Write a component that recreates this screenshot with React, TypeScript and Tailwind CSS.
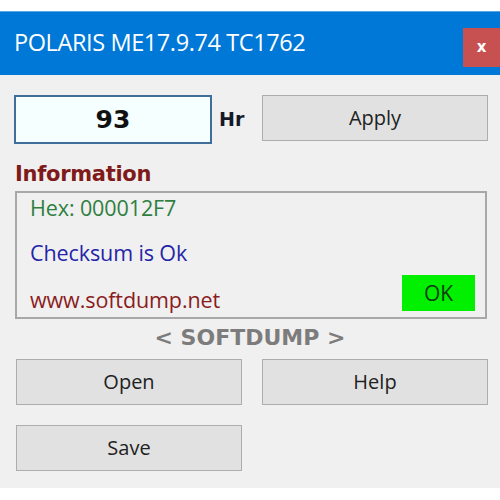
export default function App() {
    return (
        <div className="w-[500px] h-[500px] bg-white pt-[11px] overflow-hidden" style={{ fontFamily: '"Open Sans", "Noto Sans", sans-serif' }}>
            <div className="h-[64px] bg-[#0078d7] border-t border-[#5aa5e6] flex items-start">
                <span className="text-white text-[23.5px] ml-[14px] mt-[19px] leading-none tracking-[-0.4px]">POLARIS ME17.9.74 TC1762</span>
                <button className="ml-auto mt-[16px] w-[37px] h-[39px] bg-[#c75050] text-white font-bold text-[15px] leading-none flex items-center justify-center" style={{ fontFamily: '"DejaVu Sans", sans-serif' }}>x</button>
            </div>

            <div className="h-[413px] bg-[#f0f0f0] flex flex-col px-[14px]">
                <div className="flex items-center mt-[20px]">
                    <div className="w-[198px] h-[49px] border-2 border-[#3f6f98] bg-[#f6ffff] flex items-center justify-center">
                        <span className="text-[25px] font-bold text-[#111] leading-none" style={{ fontFamily: '"DejaVu Sans", sans-serif' }}>93</span>
                    </div>
                    <span className="ml-[7px] text-[19px] font-bold text-[#141a2a]" style={{ fontFamily: '"DejaVu Sans", sans-serif' }}>Hr</span>
                    <button className="ml-auto mr-[-2px] -mt-[4px] w-[226px] h-[46px] bg-[#e1e1e1] border border-[#adadad] text-[20px] text-[#222]">Apply</button>
                </div>

                <div className="mt-[20px] ml-[1px] text-[21px] font-bold text-[#7f1a1a] leading-none tracking-[-0.3px]" style={{ fontFamily: '"DejaVu Sans", sans-serif' }}>Information</div>

                <div className="mt-[6px] ml-[1px] mr-[-1px] h-[128px] border-2 border-[#a8a8a8]">
                    <div className="pl-[13px] pt-[4px] flex flex-col text-[21.5px] leading-none tracking-[-0.1px]">
                        <span className="text-[#2f7f3f] h-[22px]">Hex: 000012F7</span>
                        <span className="text-[#2424a8] mt-[23px] h-[22px]">Checksum is Ok</span>
                        <div className="flex items-start mt-[20px]">
                            <span className="text-[#8b1c1c] mt-[5px]">www.softdump.net</span>
                            <div className="ml-auto mr-[10px] -mt-[9px] w-[73px] h-[36px] bg-[#00f000] text-[#0d3d0d] text-[21px] flex items-center justify-center">OK</div>
                        </div>
                    </div>
                </div>

                <div className="mt-[8px] text-center text-[22px] font-bold text-[#7c7c7c] leading-none" style={{ fontFamily: '"DejaVu Sans", sans-serif' }}>&lt; SOFTDUMP &gt;</div>

                <div className="grid grid-cols-2 gap-x-[20px] gap-y-[20px] mt-[10px] ml-[2px] mr-[-2px] text-[20px] text-[#222]">
                    <button className="h-[46px] bg-[#e1e1e1] border border-[#adadad]">Open</button>
                    <button className="h-[46px] bg-[#e1e1e1] border border-[#adadad]">Help</button>
                    <button className="h-[46px] bg-[#e1e1e1] border border-[#adadad]">Save</button>
                </div>
            </div>
        </div>
    )
}
